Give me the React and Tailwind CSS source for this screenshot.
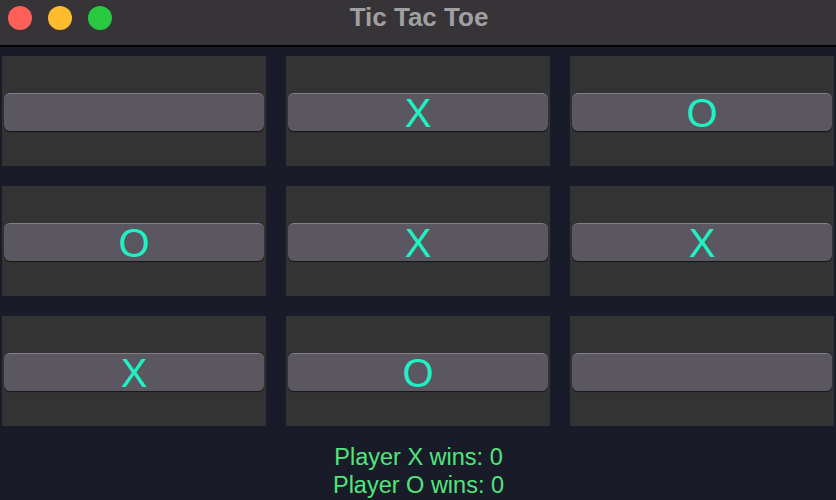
import React from 'react';

// board state, row by row
const board = ['', 'X', 'O', 'O', 'X', 'X', 'X', 'O', ''];

const Cell = ({ mark }) => (
    <div className="flex items-center bg-[#333333] px-[2px] pt-[2px]">
        <button className="h-[38px] w-full rounded-[6px] bg-[#5a5761] border-t border-t-[#827f88] shadow-[0_1px_1px_rgba(0,0,0,0.6)] text-[40px] leading-none text-[#1ef2c5] flex items-center justify-center">
            {mark}
        </button>
    </div>
);

function App() {
    return (
        <div className="w-[836px] h-[500px] overflow-hidden bg-[#1a1b28] font-['Liberation_Sans',Arial,sans-serif]">
            {/* Title bar */}
            <div className="relative h-[47px] bg-[#363436] border-b-2 border-b-black flex items-center justify-center">
                <div className="absolute left-[8px] top-[6px] flex gap-[16px]">
                    <span className="w-[24px] h-[24px] rounded-full bg-[#fe5f57]" />
                    <span className="w-[24px] h-[24px] rounded-full bg-[#febc2e]" />
                    <span className="w-[24px] h-[24px] rounded-full bg-[#28c840]" />
                </div>
                <h1 className="text-[26px] font-bold text-[#a09fa2] -mt-[11px] pl-[2px]">Tic Tac Toe</h1>
            </div>

            {/* Board */}
            <div className="pt-[9px] pl-[2px] grid grid-cols-[264px_264px_264px] grid-rows-[110px_110px_110px] gap-[20px]">
                {board.map((m, i) => (
                    <Cell key={i} mark={m} />
                ))}
            </div>

            {/* Score */}
            <div className="mt-[17px] text-center text-[23.5px] leading-[28px] text-[#50e57c] pl-[1px]">
                <div>Player X wins: 0</div>
                <div>Player O wins: 0</div>
            </div>
        </div>
    );
}

export default App;
